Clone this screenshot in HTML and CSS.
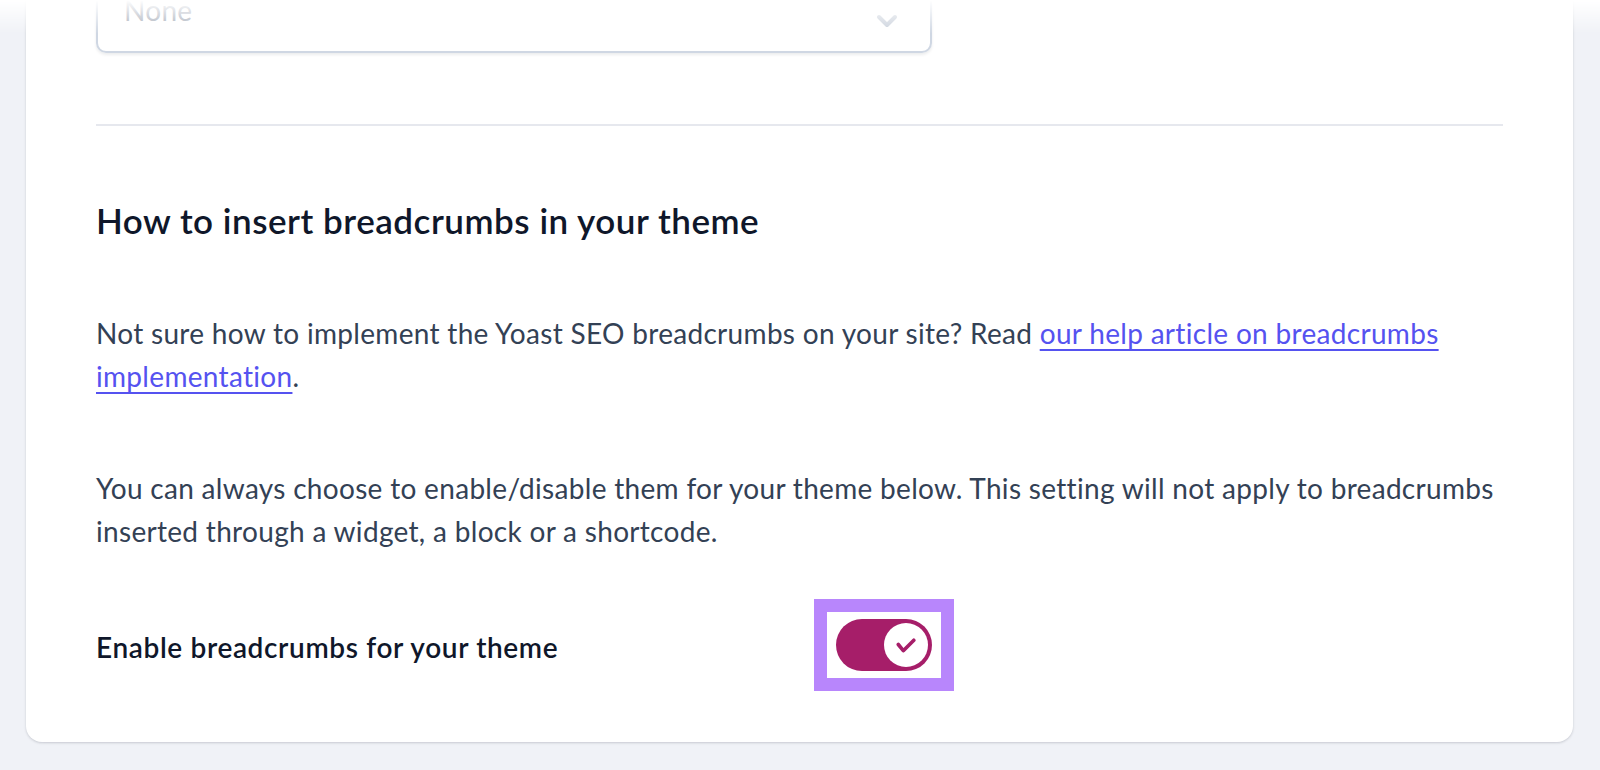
FILE: index.html
```html
<!DOCTYPE html>
<html lang="en">
<head>
<meta charset="utf-8">
<title>Breadcrumbs settings</title>
<link rel="stylesheet" href="styles.css">
</head>
<body>
<div class="top-fade"></div>
<main class="page">
  <section class="card">
    <div class="select">
      <span class="select-value">None</span>
      <svg class="chevron" viewBox="0 0 22 14" width="22" height="14" aria-hidden="true"><path d="M3 3l8 8 8-8" fill="none" stroke="currentColor" stroke-width="4" stroke-linecap="round" stroke-linejoin="round"/></svg>
    </div>
    <hr class="divider">
    <h2 class="title">How to insert breadcrumbs in your theme</h2>
    <p class="text">Not sure how to implement the Yoast SEO breadcrumbs on your site? Read <a href="#" class="link">our help article on breadcrumbs implementation</a>.</p>
    <p class="text text-second">You can always choose to enable/disable them for your theme below. This setting will not apply to breadcrumbs inserted through a widget, a block or a shortcode.</p>
    <div class="toggle-row">
      <span class="toggle-label">Enable breadcrumbs for your theme</span>
      <span class="focus-ring">
        <span class="toggle">
          <span class="knob">
            <svg viewBox="0 0 20 15" width="20" height="15" aria-hidden="true"><path d="M2.3 6.5l5 6.2L17.8 2.2" fill="none" stroke="currentColor" stroke-width="3.6" stroke-linecap="round" stroke-linejoin="round"/></svg>
          </span>
        </span>
      </span>
    </div>
  </section>
</main>
</body>
</html>
```
FILE: styles.css
```css
html, body {
  margin: 0;
  padding: 0;
  height: 100%;
  overflow: hidden;
}
body {
  background: #f0f2f7;
  font-family: Lato, "Noto Sans", sans-serif;
  color: #334155;
}
.top-fade {
  position: fixed;
  top: 0;
  left: 0;
  right: 0;
  height: 34px;
  background: linear-gradient(to bottom, #ffffff 0%, rgba(255,255,255,0.6) 40%, rgba(240,242,247,0) 100%);
  pointer-events: none;
  z-index: 1;
}
.page {
  padding: 0 27px 0 26px;
}
.card {
  margin-top: -40px;
  background: #ffffff;
  border-radius: 16px;
  box-shadow: 0 1px 3px rgba(15, 23, 42, 0.12), 0 1px 2px rgba(15, 23, 42, 0.06);
  padding: 20px 70px 51px 70px;
}
.select {
  width: 836px;
  height: 73px;
  box-sizing: border-box;
  border: 2px solid #cfd7e3;
  border-radius: 10px;
  box-shadow: 0 2px 3px rgba(15, 23, 42, 0.08);
  display: flex;
  align-items: center;
  justify-content: space-between;
  padding: 0 32px 0 26px;
}
.select-value {
  font-size: 28px;
  color: #a0a7b4;
  line-height: 42px;
  letter-spacing: 0.3px;
  margin-top: -14px;
}
.chevron {
  color: #c9d0db;
  margin-top: 8px;
}
.divider {
  border: 0;
  border-top: 2px solid #e6e8ee;
  margin: 71px 0 0 0;
}
.title {
  margin: 72px 0 0 0;
  font-size: 35px;
  line-height: 44px;
  font-weight: 600;
  letter-spacing: 0.52px;
  color: #0f172a;
}
.text {
  margin: 70px 0 0 0;
  font-size: 28px;
  line-height: 42.5px;
  letter-spacing: 0.31px;
  color: #334155;
}
.link {
  color: #5552f0;
  text-decoration: underline;
  text-underline-offset: 5px;
  text-decoration-thickness: 2px;
}
.toggle-row {
  margin-top: 47px;
  display: grid;
  grid-template-columns: 718px auto;
  align-items: center;
}
.toggle-label {
  font-size: 28px;
  font-weight: 600;
  letter-spacing: 0.64px;
  color: #0f172a;
  margin-top: 3px;
}
.focus-ring {
  display: inline-flex;
  padding: 7px 9px;
  background: #ffffff;
  border: 13px solid #b886fc;
  justify-self: start;
}
.toggle {
  width: 96px;
  height: 52px;
  box-sizing: border-box;
  border-radius: 26px;
  background: #a61e69;
  display: flex;
  align-items: center;
  justify-content: flex-end;
  padding-right: 4px;
}
.knob {
  width: 44px;
  height: 44px;
  border-radius: 50%;
  background: #ffffff;
  display: flex;
  align-items: center;
  justify-content: center;
  color: #a61e69;
}
```
